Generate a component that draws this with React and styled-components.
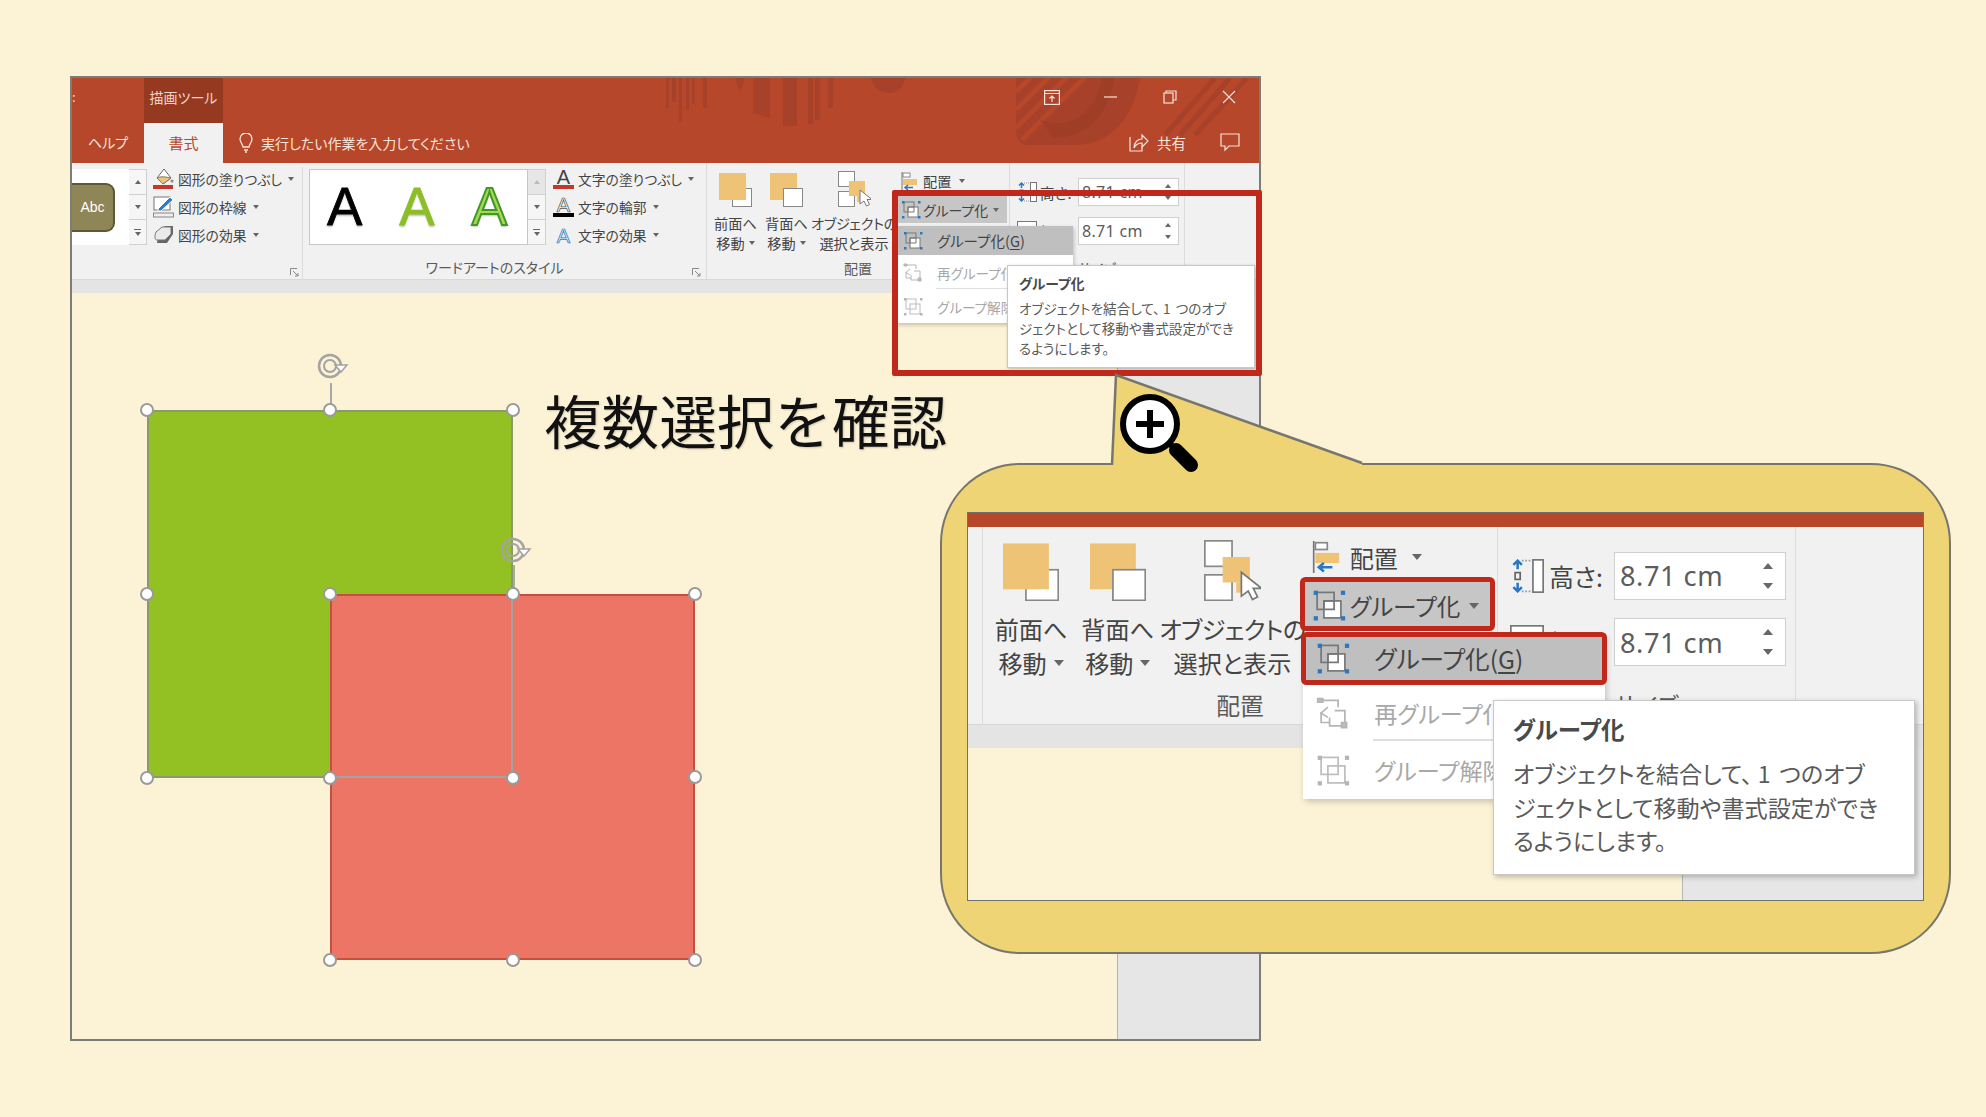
import React from "react";
import styled, { createGlobalStyle } from "styled-components";

const CREAM = "#fcf2d6";
const RED = "#b7472a";
const MARK = "#c0281c";
const GOLD = "#efd476";
const RIBBON = "#f1f1f1";
const SANS = `"Noto Sans CJK JP", "Noto Sans", sans-serif`;

const Global = createGlobalStyle`
  html, body { margin: 0; padding: 0; background: ${CREAM}; }
  #root { width: 1986px; height: 1117px; overflow: hidden; }
  * { box-sizing: border-box; }
`;

const Stage = styled.div`
  position: relative;
  width: 1986px;
  height: 1117px;
  padding: 76px 0 0 70px;
  background: ${CREAM};
  font-family: ${SANS};
  font-feature-settings: "palt";
  color: #444;
`;

const Window = styled.div`
  display: flex;
  flex-direction: column;
  width: 1191px;
  height: 965px;
  border: 2px solid #7d7d78;
`;

/* ---------- title bar ---------- */
const TitleBar = styled.div`
  position: relative;
  display: flex;
  flex-direction: column;
  height: 85px;
  background: ${RED};
  color: #fff;
`;
const Decor = styled.svg`
  position: absolute;
  left: 0;
  top: 0;
`;
const TopRow = styled.div`
  position: relative;
  display: flex;
  align-items: stretch;
  height: 45px;
`;
const EdgeMark = styled.span`
  width: 72px;
  font-size: 13px;
  line-height: 38px;
  color: #f3d6cc;
`;
const ToolTab = styled.div`
  width: 79px;
  background: #953a21;
  font-size: 14px;
  line-height: 38px;
  text-align: center;
  color: #ecd5cc;
`;
const Controls = styled.div`
  display: flex;
  margin-left: auto;
  margin-right: 1px;
`;
const Control = styled.div`
  display: flex;
  align-items: center;
  justify-content: center;
  width: 59px;
  height: 38px;
`;
const TabRow = styled.div`
  position: relative;
  display: flex;
  align-items: center;
  height: 40px;
`;
const Tab = styled.div`
  display: flex;
  align-items: center;
  justify-content: center;
  height: 100%;
  padding-bottom: 2px;
  width: ${(p) => p.$w}px;
  font-size: ${(p) => (p.$active ? 15 : 14)}px;
  color: ${(p) => (p.$active ? RED : "#f6e3dc")};
  background: ${(p) => (p.$active ? RIBBON : "transparent")};
`;
const Tell = styled.div`
  display: flex;
  align-items: center;
  gap: 6px;
  margin-left: 14px;
  padding-bottom: 1px;
  font-size: 14px;
  color: #f6e3dc;
`;
const ShareArea = styled.div`
  display: flex;
  align-items: center;
  margin-left: auto;
  margin-right: 19px;
  padding-bottom: 2px;
  gap: 8px;
  font-size: 14.5px;
  color: #f6e3dc;
`;
const Comment = styled.svg`
  margin-left: 26px;
`;

/* ---------- ribbon ---------- */
const RibbonRow = styled.div`
  position: relative;
  z-index: 3;
  display: flex;
  height: 116px;
  background: ${RIBBON};
`;
const Group = styled.div`
  position: relative;
  display: flex;
  flex-direction: column;
  flex: none;
  width: ${(p) => p.$w}px;
  padding-left: ${(p) => p.$pad || 0}px;
  border-right: ${(p) => (p.$sep ? "1px solid #dcdcdc" : "none")};
  margin-top: 4px;
`;
const GroupTop = styled.div`
  display: flex;
  margin-top: 2px;
  height: 76px;
`;
const GroupLabel = styled.div`
  margin-top: auto;
  margin-bottom: ${(p) => p.$mb || 0}px;
  height: 18px;
  font-size: 14px;
  line-height: 18px;
  text-align: center;
  color: #5a5a5a;
  padding-right: ${(p) => p.$shift || 0}px;
`;
const Launcher = styled.svg`
  position: absolute;
  right: 3px;
  bottom: 2px;
`;
const Gallery = styled.div`
  display: flex;
  align-items: center;
  gap: ${(p) => (p.$spread ? 37 : 0)}px;
  width: ${(p) => p.$w}px;
  background: #fff;
  border: ${(p) => (p.$framed ? "1px solid #c6c6c6" : "none")};
  padding-left: ${(p) => (p.$spread ? 17 : 0)}px;
`;
const AbcButton = styled.div`
  width: 43px;
  height: 49px;
  background: #8f8657;
  border: 2px solid #5e5836;
  border-left: none;
  border-radius: 0 9px 9px 0;
  color: #fff;
  font-size: 14px;
  line-height: 44px;
  text-align: center;
  font-family: "Liberation Sans", sans-serif;
`;
const ScrollCol = styled.div`
  display: flex;
  flex-direction: column;
  width: 18px;
  border: 1px solid #d0d0d0;
  border-left: none;
`;
const ScrollCell = styled.div`
  flex: 1;
  display: flex;
  align-items: center;
  justify-content: center;
  background: ${(p) => (p.$off ? "#e6e6e6" : "#f6f6f6")};
  & + & { border-top: 1px solid #d0d0d0; }
`;
const Tri = styled.i`
  display: inline-block;
  width: 0;
  height: 0;
  border-left: 3px solid transparent;
  border-right: 3px solid transparent;
  ${(p) => (p.$up ? `border-bottom: 4px solid ${p.$c || "#666"};` : `border-top: 4px solid ${p.$c || "#666"};`)}
`;
const MoreTri = styled.div`
  display: flex;
  flex-direction: column;
  align-items: center;
  gap: 2px;
  &::before { content: ""; width: 7px; height: 1px; background: #666; }
`;
const CmdCol = styled.div`
  display: flex;
  flex-direction: column;
  margin-left: ${(p) => p.$ml}px;
  margin-top: -4px;
`;
const Cmd = styled.div`
  display: flex;
  flex: none;
  align-items: center;
  gap: 3px;
  height: 28px;
  font-size: 13.8px;
  color: #444;
  white-space: nowrap;
  & > i { margin-left: 3px; }
`;
const WordA = styled.span`
  font-family: "Liberation Sans", sans-serif;
  font-size: 53px;
  line-height: 60px;
  color: ${(p) => p.$c};
  -webkit-text-stroke: ${(p) => p.$stroke || "0"};
  text-shadow: 0 2px 2px rgba(0, 0, 0, 0.25);
`;

/* ---------- shared arrange / size part ---------- */
const Shared = styled.div`
  position: relative;
  flex: none;
  display: flex;
  width: 556px;
  height: 116px;
  padding-left: 2px;
`;
const ArrangeGroup = styled.div`
  display: flex;
  flex-direction: column;
  width: 304px;
  height: 116px;
  border-left: 1px solid #dcdcdc;
  border-right: 1px solid #dcdcdc;
`;
const ArrangeTop = styled.div`
  display: flex;
  padding-left: 6px;
`;
const BigButtons = styled.div`
  display: grid;
  grid-template-columns: 45px 47px 78px;
  column-gap: 5px;
  padding-top: 8px;
`;
const BigButton = styled.div`
  display: flex;
  flex-direction: column;
  align-items: center;
  font-size: 14.2px;
  line-height: 20px;
  color: #444;
  white-space: nowrap;
  & > svg { margin-bottom: 6px; }
`;
const TightLine = styled.span`
  letter-spacing: -0.35px;
`;
const BigLine = styled.div`
  display: flex;
  align-items: center;
  gap: 4px;
`;
const SmallCol = styled.div`
  display: flex;
  flex-direction: column;
  width: 112px;
  margin-left: 2px;
  padding-top: 5px;
`;
const SmallRow = styled.div`
  display: flex;
  align-items: center;
  height: 26px;
  padding-left: 6px;
  gap: 5px;
  font-size: 14.2px;
  & > i { margin-left: 3px; }
`;
const GroupButton = styled.div`
  display: flex;
  align-items: center;
  height: 29px;
  padding: 2px 0 0 6px;
  gap: 2px;
  font-size: 13.9px;
  color: #444;
  background: #c6c6c6;
  ${(p) => p.$marked && `outline: 3px solid ${MARK}; outline-offset: -2px; border-radius: 2px;`}
  & > i { margin-left: 3px; }
`;
const SizeGroup = styled.div`
  display: flex;
  flex-direction: column;
  width: 175px;
  height: 116px;
  padding-top: 15px;
  border-right: 1px solid #dcdcdc;
`;
const SizeRow = styled.div`
  display: flex;
  align-items: center;
  height: 28px;
  padding-left: 7px;
  margin-bottom: 11px;
`;
const SizeLabel = styled.span`
  width: 41px;
  padding-left: 3px;
  font-size: 14.5px;
  color: #444;
`;
const Field = styled.div`
  display: flex;
  align-items: center;
  justify-content: space-between;
  width: 101px;
  height: 28px;
  padding: 0 7px 0 3px;
  background: #fff;
  border: 1px solid #cfcfcf;
  font-family: "Noto Sans", sans-serif;
  font-size: 16px;
  letter-spacing: 0.3px;
  color: #5c5c5c;
`;
const Spin = styled.div`
  display: flex;
  flex-direction: column;
  gap: 8px;
`;
const SizeLabelBottom = styled(GroupLabel)`
  margin-bottom: 2px;
`;

const Menu = styled.div`
  position: absolute;
  left: 191px;
  top: 63px;
  width: 178px;
  height: 97px;
  background: #fff;
  box-shadow: 1px 2px 4px rgba(0, 0, 0, 0.22);
`;
const MenuRow = styled.div`
  display: flex;
  align-items: center;
  height: 29px;
  padding-left: 8px;
  font-size: ${(p) => (p.$on ? 14.5 : 13.6)}px;
  color: ${(p) => (p.$on ? "#444" : "#a8a8a8")};
  background: ${(p) => (p.$on ? "#bfbfbf" : "transparent")};
  margin-bottom: ${(p) => (p.$on ? 3 : 0)}px;
  white-space: nowrap;
  overflow: hidden;
  ${(p) => p.$marked && `outline: 3px solid ${MARK}; outline-offset: -2px; border-radius: 2px;`}
  & > svg { flex: none; margin-right: 14px; }
`;
const MenuRule = styled.div`
  height: 1px;
  margin: 1px 0 3px 41px;
  background: #e0e0e0;
`;
const Underlined = styled.span`
  text-decoration: underline;
  text-underline-offset: 2px;
`;
const Tooltip = styled.div`
  position: absolute;
  left: 303px;
  top: 102px;
  width: 248px;
  height: 103px;
  padding: 6px 8px 0 11px;
  background: #fff;
  border: 1px solid #c8c8c8;
  box-shadow: 1px 1px 3px rgba(0, 0, 0, 0.25);
  color: #5a5a5a;
`;
const TipTitle = styled.div`
  font-size: 13.8px;
  font-weight: 700;
  line-height: 22px;
  color: #4a4a4a;
`;
const TipBody = styled.div`
  margin-top: 5px;
  font-size: 13.6px;
  line-height: 19.8px;
  white-space: nowrap;
`;
const Wide = styled.span`
  padding: 0 2px 0 3px;
`;

/* ---------- work area ---------- */
const Band = styled.div`
  flex: none;
  height: 14px;
  background: #e4e4e4;
  border-top: 1px solid #d8d8d8;
`;
const WorkArea = styled.div`
  flex: 1;
  display: flex;
  min-height: 0;
`;
const Sheet = styled.div`
  position: relative;
  flex: 1;
  background: ${CREAM};
`;
const Rail = styled.div`
  flex: none;
  width: 142px;
  background: #e6e6e6;
  border-left: 1px solid #b5b5b5;
`;
const Rect = styled.div`
  position: absolute;
  left: ${(p) => p.$x}px;
  top: ${(p) => p.$y}px;
  width: ${(p) => p.$w}px;
  height: ${(p) => p.$h}px;
  background: ${(p) => p.$fill || "transparent"};
  border: 2px solid ${(p) => p.$line};
`;
const OverlapRect = styled(Rect)`
  clip-path: inset(184px 0 0 183px);
`;
const Handle = styled.span`
  position: absolute;
  left: ${(p) => p.$x - 7}px;
  top: ${(p) => p.$y - 7}px;
  width: 14px;
  height: 14px;
  border-radius: 50%;
  background: #fff;
  border: 2px solid #9a9a9a;
`;
const Stem = styled.span`
  position: absolute;
  left: ${(p) => p.$x}px;
  top: ${(p) => p.$y}px;
  width: 2px;
  height: ${(p) => p.$h}px;
  background: #a8a8a8;
`;
const Rotate = styled.svg`
  position: absolute;
  left: ${(p) => p.$x - 17}px;
  top: ${(p) => p.$y - 15}px;
`;
const Heading = styled.div`
  position: absolute;
  left: 472px;
  top: 90px;
  font-size: 57.6px;
  line-height: 72px;
  color: #111;
  font-feature-settings: normal;
  white-space: nowrap;
  text-shadow: 1px 1px 2px rgba(0, 0, 0, 0.18);
`;

/* ---------- overlays ---------- */
const RedFrame = styled.div`
  position: absolute;
  z-index: 5;
  left: 892px;
  top: 190px;
  width: 370px;
  height: 186px;
  border: 6px solid ${MARK};
  border-radius: 2px;
`;
const Callout = styled.div`
  position: absolute;
  z-index: 6;
  left: 940px;
  top: 463px;
  width: 1011px;
  height: 491px;
  padding: 47px 25px;
  background: ${GOLD};
  border: 2.5px solid #76766c;
  border-radius: 80px;
`;
const Tail = styled.svg`
  position: absolute;
  left: 162px;
  top: -90px;
  overflow: visible;
`;
const Lens = styled.svg`
  position: absolute;
  left: 170px;
  top: -79px;
`;
const Picture = styled.div`
  width: 957px;
  height: 389px;
  border: 1.5px solid #6f6f6f;
  overflow: hidden;
  background: ${CREAM};
`;
const Zoomed = styled.div`
  zoom: 1.7;
  display: flex;
  flex-direction: column;
  width: 562px;
  height: 228px;
`;
const Strip = styled.div`
  flex: none;
  height: 8px;
  background: ${RED};
`;
const PictureRibbon = styled(RibbonRow)`
  padding-left: 6px;
`;

/* ---------- drawings ---------- */
const Bulb = () => (
  <svg width="18" height="20" viewBox="0 0 18 20" fill="none" stroke="#f6e3dc" strokeWidth="1.3">
    <path d="M6 14c0-3-3-4-3-8a6 6 0 0 1 12 0c0 4-3 5-3 8z" />
    <path d="M7 17h4M8 19h2" />
  </svg>
);
const Launch = () => (
  <Launcher width="9" height="9" viewBox="0 0 9 9" fill="none" stroke="#888">
    <path d="M.5 7V.5H7" />
    <path d="M3 3l5 5M5 8h3V5" />
  </Launcher>
);
const FillIcon = () => (
  <svg width="22" height="22" viewBox="0 0 22 22" fill="none">
    <path d="M11 1l-7 9 6 6 8-6z" fill="#fff" stroke="#666" />
    <path d="M4 10c4-2 9-1 14 0l-8 6z" fill="#efc375" stroke="#777" />
    <circle cx="19" cy="13" r="1.5" fill="#888" />
    <rect x="0" y="17" width="20" height="4" fill="#c0392b" />
  </svg>
);
const PenIcon = () => (
  <svg width="22" height="22" viewBox="0 0 22 22" fill="none">
    <rect x="1" y="1" width="16" height="13" fill="#fff" stroke="#777" />
    <path d="M5 13L17 1l3 3L8 15H5z" fill="#2e7cc4" stroke="#fff" />
    <rect x="0.5" y="17" width="20" height="4" fill="#eee" stroke="#888" />
  </svg>
);
const EffectIcon = () => (
  <svg width="22" height="22" viewBox="0 0 22 22">
    <path d="M6 7L12 2h8v8l-6 9H4z" fill="#666" />
    <path d="M3 8l6-5h9v7l-6 6H4C2 16 1 13 3 8z" fill="#eaeaea" stroke="#777" />
  </svg>
);
const TextIcon = ({ bar, color, stroke }) => (
  <svg width="22" height="24" viewBox="0 0 22 24">
    <text x="10.5" y={bar ? 17 : 20} textAnchor="middle" fontFamily="Liberation Sans" fontSize="20" fill={color} stroke={stroke} strokeWidth={stroke ? 0.7 : 0}>A</text>
    {bar && <rect x="0" y="18" width="21" height="4" fill={bar} />}
  </svg>
);
const FrontIcon = ({ back }) => (
  <svg width="33" height="36" viewBox="0 0 33 36">
    <rect x="13.5" y="17.5" width="19" height="18" fill="#fff" stroke="#888" />
    <rect x="0" y="2" width="27" height="27" fill="#efc375" />
    {back && <rect x="13.5" y="17.5" width="19" height="18" fill="#fff" stroke="#888" />}
  </svg>
);
const SelectIcon = () => (
  <svg width="33" height="36" viewBox="0 0 33 36">
    <rect x="0.5" y="0.5" width="16" height="15" fill="#fff" stroke="#888" />
    <rect x="0.5" y="20.5" width="16" height="15" fill="#fff" stroke="#888" />
    <rect x="11" y="10" width="16" height="15" fill="#efc375" />
    <rect x="19" y="25" width="5" height="6" fill="#efc375" />
    <path d="M22 19v14l4-3 2.500 5 3-1.500-2.500-5h5z" fill="#fff" stroke="#777" />
  </svg>
);
const AlignIcon = () => (
  <svg width="17" height="19" viewBox="0 0 17 19">
    <path d="M1 0v19" stroke="#777" />
    <rect x="2" y="1" width="7" height="4" fill="#fff" stroke="#888" />
    <rect x="2" y="7" width="14" height="6" fill="#efc375" />
    <path d="M12 15.500H4M7 13l-3 2.500L7 18" fill="none" stroke="#2b78c2" strokeWidth="1.500" />
  </svg>
);
const GroupIcon = ({ off }) => {
  const blue = off ? "#b5b5b5" : "#2b78c2";
  const line = off ? "#bdbdbd" : "#777";
  return (
    <svg width="20" height="19" viewBox="0 0 20 19" fill="none">
      <rect x="3" y="2" width="10" height="10" stroke={line} />
      <rect x="7" y="7" width="10" height="10" fill={off ? "none" : "#fff"} stroke={line} />
      {!off && <path d="M7 7h6v5H7z" stroke={line} />}
      {[[1, 1], [17, 1], [1, 16], [17, 16]].map(([x, y]) => (
        <rect key={`${x}${y}`} x={x} y={y} width="2.500" height="2.500" fill={blue} />
      ))}
    </svg>
  );
};
const RegroupIcon = () => (
  <svg width="20" height="19" viewBox="0 0 20 19" fill="none" stroke="#b5b5b5">
    <path d="M4 2h9v4M3 9v6h5M11 8h6v9h-9v-5" />
    <path d="M7 6L3 9.500 7 12" />
    <path d="M1 1h3v2H1zM15 15h3v3h-3z" fill="#bbb" />
  </svg>
);
const HeightIcon = () => (
  <svg width="20" height="20" viewBox="0 0 20 20" fill="none">
    <path d="M4.500 1v5M4.500 14v5M2 3.500L4.500 1 7 3.500M2 16.500L4.500 19 7 16.500" stroke="#2b78c2" strokeWidth="1.500" />
    <rect x="3" y="8" width="3" height="4" stroke="#666" />
    <path d="M7 1h7M7 19h7" stroke="#999" strokeDasharray="1 1" />
    <rect x="13.500" y="0.500" width="6" height="19" fill="#fff" stroke="#777" />
  </svg>
);
const WidthIcon = () => (
  <svg width="20" height="20" viewBox="0 0 20 20" fill="none">
    <rect x="0.500" y="0.500" width="19" height="8" fill="#fff" stroke="#777" />
  </svg>
);
const RotateIcon = ({ x, y }) => (
  <Rotate $x={x} $y={y} width="36" height="30" viewBox="0 0 36 30" fill="none">
    <circle cx="15" cy="15" r="11" stroke="#a3a3a3" strokeWidth="2.500" />
    <circle cx="15" cy="15" r="6" stroke="#a3a3a3" strokeWidth="2" />
    <path d="M20 14l12 0-6 7z" fill="#fff" stroke="#a3a3a3" strokeWidth="1.500" />
  </Rotate>
);

/* shared right part of the ribbon: drawn in the window and again, enlarged, in the callout */
const ArrangeAndSize = ({ marked }) => (
  <Shared>
    <ArrangeGroup>
      <ArrangeTop>
        <BigButtons>
          <BigButton>
            <FrontIcon />
            <span>前面へ</span>
            <BigLine>移動<Tri /></BigLine>
          </BigButton>
          <BigButton>
            <FrontIcon back />
            <span>背面へ</span>
            <BigLine>移動<Tri /></BigLine>
          </BigButton>
          <BigButton>
            <SelectIcon />
            <TightLine>オブジェクトの</TightLine>
            <span>選択と表示</span>
          </BigButton>
        </BigButtons>
        <SmallCol>
          <SmallRow>
            <AlignIcon />
            <span>配置</span>
            <Tri />
          </SmallRow>
          <GroupButton $marked={marked}>
            <GroupIcon />
            <span>グループ化</span>
            <Tri />
          </GroupButton>
        </SmallCol>
      </ArrangeTop>
      <GroupLabel $mb={2}>配置</GroupLabel>
    </ArrangeGroup>
    <SizeGroup>
      <SizeRow>
        <HeightIcon />
        <SizeLabel>高さ:</SizeLabel>
        <Field>
          8.71 cm
          <Spin><Tri $up /><Tri /></Spin>
        </Field>
      </SizeRow>
      <SizeRow>
        <WidthIcon />
        <SizeLabel>幅:</SizeLabel>
        <Field>
          8.71 cm
          <Spin><Tri $up /><Tri /></Spin>
        </Field>
      </SizeRow>
      <SizeLabelBottom>サイズ</SizeLabelBottom>
    </SizeGroup>
    <Menu>
      <MenuRow $on $marked={marked}>
        <GroupIcon />
        <span>グループ化(<Underlined>G</Underlined>)</span>
      </MenuRow>
      <MenuRow>
        <RegroupIcon />
        <span>再グループ化(E)</span>
      </MenuRow>
      <MenuRule />
      <MenuRow>
        <GroupIcon off />
        <span>グループ解除(U)</span>
      </MenuRow>
    </Menu>
    <Tooltip>
      <TipTitle>グループ化</TipTitle>
      <TipBody>
        オブジェクトを結合して、<Wide>1</Wide> つのオブ<br />
        ジェクトとして移動や書式設定ができ<br />
        るようにします。
      </TipBody>
    </Tooltip>
  </Shared>
);

export default function App() {
  return (
    <Stage>
      <Global />
      <Window>
        <TitleBar>
          <Decor width="1188" height="85" viewBox="72 78 1188 85" fill="#a8412a">
            <rect x="666" y="78" width="3" height="30" />
            <rect x="672" y="78" width="4" height="24" />
            <rect x="679" y="78" width="3" height="44" />
            <rect x="686" y="78" width="3" height="32" />
            <rect x="692" y="78" width="3" height="26" />
            <rect x="703" y="78" width="4" height="30" />
            <path d="M735 78h10l-5 14z" />
            <path d="M753 78h17v40l-17-5z" />
            <rect x="783" y="78" width="14" height="48" />
            <rect x="808" y="78" width="5" height="46" />
            <rect x="815" y="78" width="5" height="42" />
            <rect x="828" y="78" width="5" height="30" />
            <path d="M871 78h34c-2 20-30 20-34 0z" />
            <path d="M1016 78h124c-6 40-30 66-62 67h-48q-14 0-14-14z" />
            <g stroke={RED} strokeWidth="5">
              <path d="M1016 92l18-18M1016 110l36-36M1016 128l54-54M1022 140l66-66" />
            </g>
            <path d="M1040 120c34 12 56-10 62-42h12c-4 36-28 60-60 60z" fill="#a03d26" />
            <g stroke="#a8412a" strokeWidth="5">
              <path d="M1165 135l50-57M1180 135l50-57M1195 135l52-57" />
            </g>
          </Decor>
          <TopRow>
            <EdgeMark>:</EdgeMark>
            <ToolTab>描画ツール</ToolTab>
            <Controls>
              <Control>
                <svg width="16" height="15" viewBox="0 0 16 15" fill="none" stroke="#f6e3dc" strokeWidth="1.200">
                  <rect x="0.600" y="0.600" width="14.800" height="13.800" />
                  <path d="M1 3.500h14M8 12V6M5.500 8.500L8 6l2.500 2.500" />
                </svg>
              </Control>
              <Control>
                <svg width="14" height="14" viewBox="0 0 14 14" stroke="#f6e3dc" strokeWidth="1.200"><path d="M0 7h13" /></svg>
              </Control>
              <Control>
                <svg width="14" height="14" viewBox="0 0 14 14" fill="none" stroke="#f6e3dc" strokeWidth="1.200">
                  <rect x="1" y="3" width="9" height="10" />
                  <path d="M3 3V1h10v9h-3" />
                </svg>
              </Control>
              <Control>
                <svg width="14" height="14" viewBox="0 0 14 14" stroke="#f6e3dc" strokeWidth="1.200"><path d="M1 1l12 12M13 1L1 13" /></svg>
              </Control>
            </Controls>
          </TopRow>
          <TabRow>
            <Tab $w={72}>ヘルプ</Tab>
            <Tab $w={79} $active>書式</Tab>
            <Tell>
              <Bulb />
              <span>実行したい作業を入力してください</span>
            </Tell>
            <ShareArea>
              <svg width="20" height="20" viewBox="0 0 20 20" fill="none" stroke="#f6e3dc" strokeWidth="1.200">
                <path d="M1 5v14h12v-4" />
                <path d="M5 16c0-6 4-9 8-9V3l6 6-6 6v-4c-3 0-6 1-8 5z" />
              </svg>
              <span>共有</span>
              <Comment width="20" height="20" viewBox="0 0 20 20" fill="none" stroke="#f6e3dc" strokeWidth="1.200">
                <path d="M1 2h18v12H9l-4 4v-4H1z" />
              </Comment>
            </ShareArea>
          </TabRow>
        </TitleBar>
        <RibbonRow>
          <Group $w={231} $sep>
            <GroupTop>
              <Gallery $w={57}>
                <AbcButton>Abc</AbcButton>
              </Gallery>
              <ScrollCol>
                <ScrollCell><Tri $up /></ScrollCell>
                <ScrollCell><Tri /></ScrollCell>
                <ScrollCell><MoreTri><Tri /></MoreTri></ScrollCell>
              </ScrollCol>
              <CmdCol $ml={6}>
                <Cmd><FillIcon />図形の塗りつぶし<Tri /></Cmd>
                <Cmd><PenIcon />図形の枠線<Tri /></Cmd>
                <Cmd><EffectIcon />図形の効果<Tri /></Cmd>
              </CmdCol>
            </GroupTop>
            <Launch />
          </Group>
          <Group $w={401} $pad={6}>
            <GroupTop>
              <Gallery $w={219} $framed $spread>
                <WordA $c="#000" $stroke="0.8px #000">A</WordA>
                <WordA $c="#8cbf26" $stroke="0.8px #8cbf26">A</WordA>
                <WordA $c="#a8d65c" $stroke="2px #3f9a20">A</WordA>
              </Gallery>
              <ScrollCol>
                <ScrollCell $off><Tri $up $c="#bbb" /></ScrollCell>
                <ScrollCell><Tri /></ScrollCell>
                <ScrollCell><MoreTri><Tri /></MoreTri></ScrollCell>
              </ScrollCol>
              <CmdCol $ml={7}>
                <Cmd><TextIcon bar="#c0392b" color="#444" />文字の塗りつぶし<Tri /></Cmd>
                <Cmd><TextIcon bar="#000" color="#fff" stroke="#555" />文字の輪郭<Tri /></Cmd>
                <Cmd><TextIcon color="#d8ecfb" stroke="#2b78c2" />文字の効果<Tri /></Cmd>
              </CmdCol>
            </GroupTop>
            <GroupLabel $shift={24} $mb={3}>ワードアートのスタイル</GroupLabel>
            <Launch />
          </Group>
          <ArrangeAndSize />
        </RibbonRow>
        <Band />
        <WorkArea>
          <Sheet>
            <Rect $x={75} $y={117} $w={366} $h={368} $fill="#93c123" $line="#8a9a6e" />
            <Rect $x={258} $y={301} $w={365} $h={366} $fill="#ec7565" $line="#c4513f" />
            <OverlapRect $x={75} $y={117} $w={366} $h={368} $line="#a3a3a3" />
            <Stem $x={258} $y={90} $h={28} />
            <Stem $x={441} $y={272} $h={30} />
            <RotateIcon x={260} y={73} />
            <RotateIcon x={443} y={257} />
            {[[75, 117], [258, 117], [441, 117], [75, 301], [75, 485], [258, 485], [441, 485], [441, 301], [258, 301], [623, 301], [623, 484], [258, 667], [441, 667], [623, 667]].map(([x, y]) => (
              <Handle key={`${x}-${y}`} $x={x} $y={y} />
            ))}
            <Heading>複数選択を確認</Heading>
          </Sheet>
          <Rail />
        </WorkArea>
      </Window>
      <RedFrame />
      <Callout>
        <Tail width="260" height="95" viewBox="0 0 260 95">
          <path d="M8 93L12 0 258 88V95H8z" fill={GOLD} />
          <path d="M8 90L12 0 258 88" fill="none" stroke="#76766c" strokeWidth="2.500" />
        </Tail>
        <Lens width="90" height="95" viewBox="0 0 90 95" fill="none">
          <circle cx="38" cy="38" r="27" fill="#fff" stroke="#000" strokeWidth="6" />
          <path d="M24 38h28M38 24v28" stroke="#000" strokeWidth="6" />
          <path d="M58 58l6 6" stroke="#000" strokeWidth="6" />
          <path d="M64 64l15 15" stroke="#000" strokeWidth="14" strokeLinecap="round" />
        </Lens>
        <Picture>
          <Zoomed>
            <Strip />
            <PictureRibbon>
              <ArrangeAndSize marked />
            </PictureRibbon>
            <Band />
            <WorkArea>
              <Sheet />
              <Rail />
            </WorkArea>
          </Zoomed>
        </Picture>
      </Callout>
    </Stage>
  );
}
